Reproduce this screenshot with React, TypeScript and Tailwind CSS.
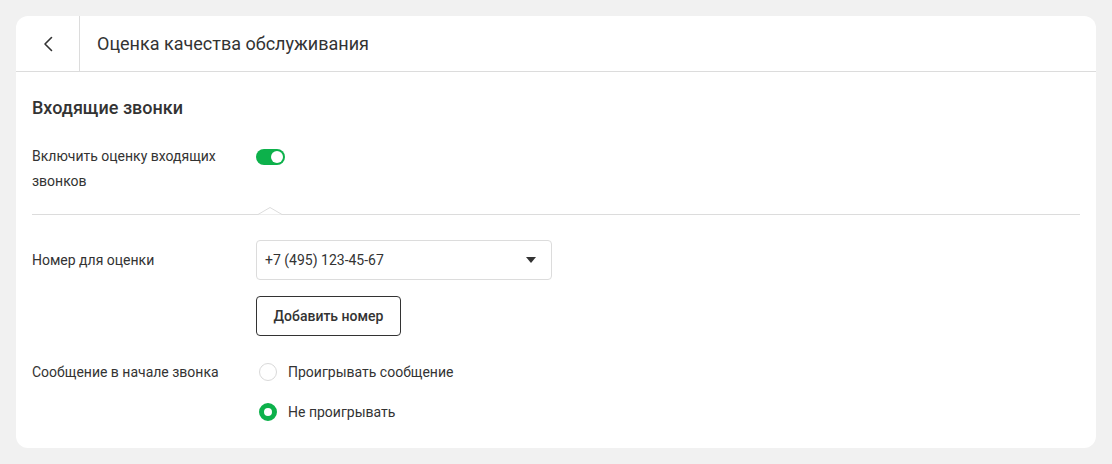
import React from "react";

export default function App() {
  return (
    <div className="min-h-[464px] w-full bg-[#f1f1f1] p-4" style={{ fontFamily: "Roboto, 'Noto Sans', sans-serif" }}>
      <div className="rounded-xl bg-white text-[#333]">
        {/* header */}
        <div className="flex h-[56px] border-b border-[#dcdcdc]">
          <div className="flex w-[64px] items-center justify-center border-r border-[#dcdcdc]">
            <svg width="16" height="16" viewBox="0 0 16 16" fill="none">
              <path d="M11.5 1.5 L5 8 L11.5 14.5" stroke="#333" strokeWidth="1.6" strokeLinecap="round" strokeLinejoin="round" />
            </svg>
          </div>
          <div className="flex items-center pl-[17px] text-[18px]">Оценка качества обслуживания</div>
        </div>

        {/* body */}
        <div className="px-4 pb-4 pt-6">
          <div className="text-[18px] font-medium leading-6">Входящие звонки</div>

          <div className="mt-6 flex">
            <div className="w-[224px] pr-4 text-[14px] leading-[25px]">Включить оценку входящих звонков</div>
            <div className="pt-[5px]">
              <div className="flex h-[16px] w-[29px] items-center justify-end rounded-full bg-[#0db14b] pr-[2px]">
                <div className="h-[12px] w-[12px] rounded-full bg-white" />
              </div>
            </div>
          </div>

          <div className="relative mt-[20px] h-px bg-[#dcdcdc]">
            <svg className="absolute left-[226px] top-[-7px]" width="24" height="8" viewBox="0 0 24 8">
              <path d="M0 7.5 L12 0.5 L24 7.5" fill="white" stroke="#dcdcdc" strokeWidth="1" />
            </svg>
          </div>

          <div className="mt-[25px] flex items-center">
            <div className="w-[224px] text-[14px]">Номер для оценки</div>
            <div className="flex h-[40px] w-[296px] items-center justify-between rounded border border-[#dcdcdc] pl-2 pr-[15px] text-[14px]">
              <span>+7 (495) 123-45-67</span>
              <svg width="10" height="6" viewBox="0 0 10 6">
                <path d="M0 0 H10 L5 6 Z" fill="#333" />
              </svg>
            </div>
          </div>

          <div className="mt-4 flex">
            <div className="w-[224px]" />
            <button className="h-[40px] w-[145px] rounded border border-[#333] text-[14px] font-medium text-[#333]">
              Добавить номер
            </button>
          </div>

          <div className="mt-4 flex">
            <div className="flex h-[40px] w-[224px] items-center text-[14px]">Сообщение в начале звонка</div>
            <div className="flex flex-col">
              <div className="flex h-[40px] items-center gap-[11px] pl-[3px] text-[14px]">
                <div className="h-[18px] w-[18px] rounded-full border border-[#d9d9d9] bg-white" />
                <span>Проигрывать сообщение</span>
              </div>
              <div className="flex h-[40px] items-center gap-[11px] pl-[3px] text-[14px]">
                <div className="h-[18px] w-[18px] rounded-full border-[5px] border-[#0db14b] bg-white" />
                <span>Не проигрывать</span>
              </div>
            </div>
          </div>
        </div>
      </div>
    </div>
  );
}
